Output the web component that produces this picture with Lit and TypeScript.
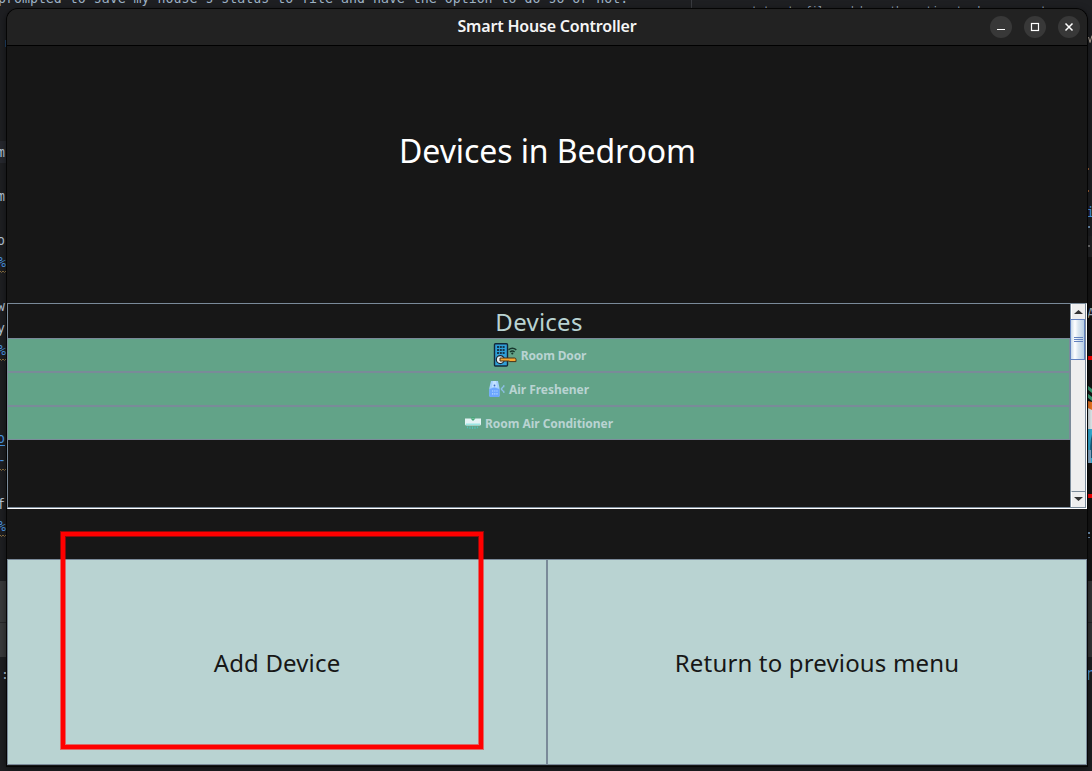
import { LitElement, html, css, svg } from "lit";
import { customElement } from "lit/decorators.js";

const doorIcon = svg`<svg width="24" height="24" viewBox="0 0 24 24">
  <rect x="1.5" y=".8" width="13" height="22.2" rx="1" fill="#2f9fd8" stroke="#14293a" stroke-width="1.4"/>
  <path d="M4 4h8M4 7h8M4 10h8" stroke="#16384e" stroke-width="2" stroke-dasharray="2 .8"/>
  <circle cx="7.3" cy="16.6" r="4" fill="#e6edf2" stroke="#1b2833" stroke-width="1.2"/>
  <path d="M7 15h14.5q1.5 0 1.5 1.5V18.600H17l-1-.6H7z" fill="#f5a733" stroke="#4a3418" stroke-width="1"/>
  <path d="M15.500 6.800q3.800-3.200 7.800 0M17 9q2.300-1.800 4.600 0" fill="none" stroke="#17372d" stroke-width="1.500"/>
  <circle cx="19.300" cy="10.500" r="1.100" fill="#17372d"/></svg>`;

const freshenerIcon = svg`<svg width="16" height="16" viewBox="0 0 16 16">
  <path d="M2 0h7l1.500 7v7.500q0 1.500-1.500 1.500H2Q.500 16 .300 14.500V7z" fill="#a4d0ff"/><path d="M4 0h3l1 6H3z" fill="#c3e2ff"/>
  <path d="M.3 8l5-1.500 5.200 1.500v6.500q0 1.500-1.500 1.500H2Q.300 16 .300 14.500z" fill="#6ca6ff"/>
  <circle cx="5.500" cy="4.500" r=".9" fill="#3c6cc4"/>
  <path d="M3 10h6M3 12.800h6" stroke="#b9dcff" stroke-width="1.200" stroke-dasharray="1.200 1"/>
  <path d="M12 8l3.500-3.500M12 8h1.500M12 8l3.500 3.500M14.800 4v2.200M14.800 9.800V12" stroke="#8cbfe4" stroke-width="1.200"/></svg>`;

const conditionerIcon = svg`<svg width="16" height="16" viewBox="0 0 16 16">
  <path d="M0 3.500h16V9q0 1.500-1.500 1.500h-13Q0 10.500 0 9z" fill="#e4f3f4"/>
  <path d="M1 8.500h14v1.500H1z" fill="#9be6e4"/><path d="M5.500 3.500h5L8 6z" fill="#47a878"/>
  <path d="M6 3q2-1.500 4 0" stroke="#47a878" fill="none"/>
  <path d="M2.500 11.500v1.700M5 11.500v2.500M7.500 11.500v2.500M10 11.500v2.500M12.500 11.500v1.700" stroke="#52c2ba" stroke-width="1"/></svg>`;

const devices = [
  { name: "Room Door", icon: doorIcon },
  { name: "Air Freshener", icon: freshenerIcon },
  { name: "Room Air Conditioner", icon: conditionerIcon },
];

@customElement("desktop-backdrop")
class DesktopBackdrop extends LitElement {
  static styles = css`
    :host { position: absolute; inset: 0; overflow: hidden; background: #1e1f22; }
    svg { display: block; font: 13.25px "DejaVu Sans Mono", monospace; }
    .small { font-size: 10px; }
    .large { font-size: 17px; }
  `;
  render() {
    return html`<svg width="1092" height="771">
      <rect y="141" width="7" height="22" fill="#26282e"/>
      <rect y="581" width="7" height="76" fill="#393a3c"/>
      <rect y="622" width="7" height="1" fill="#29292b"/>
      <rect x="1086" y="257" width="6" height="324" fill="#151515"/>
      <rect x="1086" y="236" width="6" height="21" fill="#222325"/>
      <rect x="1086" y="581" width="6" height="76" fill="#353637"/>
      <rect x="1086" y="622" width="6" height="1" fill="#252628"/>
      <rect x="691" width="1" height="8" fill="#393b40"/>
      <text x="-2" y="3.300" fill="#9fb3c6">prompted to save my house's status to file and have the option to do so or not.</text>
      <text class="small" x="745.500" y="14" fill="#9fb3c6">status to file and have the option to do so or not</text>
      <g fill="#b9c8d8">
        <text x="-3" y="157">m</text><text x="-3" y="201">m</text><text x="-3" y="245">o</text>
        <text x="-3" y="311">w</text><text x="-3" y="333">y</text><text x="-3" y="509">f</text>
        <text x="1" y="679">:</text>
      </g>
      <g fill="#4b9be8">
        <text x="-2" y="267">%</text><text x="-2" y="355">%</text><text x="-3" y="443">o</text>
        <text x="-2" y="465">-</text><text x="-2" y="531">%</text>
        <path d="M0 445h5v1H0z"/>
        <text x="1086.500" y="217">i</text><text class="large" x="1086" y="680">n</text>
      </g>
      <path d="M0 271l1.500 1.500L3 271l1.500 1.500L6 271M0 359l1.500 1.500L3 359l1.500 1.500L6 359M0 469l1.500 1.500L3 469l1.500 1.500L6 469M0 535l1.500 1.500L3 535l1.500 1.500L6 535" fill="none" stroke="#8b7040"/>
      <path d="M5 40h1v7H5z" fill="#20456b"/>
      <path d="M1088.500 37l1.500 5.500 2-7" fill="none" stroke="#b5a99c"/>
      <text x="1087" y="318" fill="#a7b7c6">A</text>
      <path d="M1088 168h1v2h-1zM1088 190h1v2h-1z" fill="#a8683a"/>
      <path d="M1088 226h2v2h-2zM1088 532h2v2h-2zM1088 537h2v1h-2z" fill="#7195b8"/>
      <path d="M1088 245h2v2h-2z" fill="#777"/>
      <path d="M1087 356h5v4h-5zM1087 494h5v4h-5z" fill="#f00"/>
      <path d="M1088 407h4v23h-4z" fill="#e8f4f7"/><path d="M1088 429h4v34h-4z" fill="#35b5df"/>
      <path d="M1092 434v24h-1q-2-12 1-24z" fill="#1c5877"/><path d="M1088 450h3v13h-3z" fill="#8bb4d4"/>
      <path d="M1087 385l5 4v4l-5-4zM1087 393l5 4v4l-5-4z" fill="#39a57b"/>
      <path d="M1088 401l4 1v8l-4-2z" fill="#f27822"/>
    </svg>`;
  }
}

@customElement("title-bar")
class TitleBar extends LitElement {
  static styles = css`
    :host { display: grid; grid-template-columns: 1fr auto 1fr; align-items: center; box-sizing: border-box; height: 37px;
      background: #222; border-bottom: 1px solid #000; border-radius: 11px 11px 0 0; color: #f5f5f5; }
    .name { grid-column: 2; font: 600 16px/34px "Noto Sans", sans-serif; white-space: nowrap; letter-spacing: -.2px; padding-bottom: 2px; }
    .controls { display: flex; justify-content: flex-end; gap: 12px; padding-right: 7px; }
    .control { width: 22px; height: 22px; border-radius: 50%; background: #383838; }
    svg { display: block; fill: none; stroke: #fff; }
  `;
  render() {
    return html`<div class="name">Smart House Controller</div>
      <div class="controls">
        <div class="control"><svg width="22" height="22"><path d="M7 13.500h8"/></svg></div>
        <div class="control"><svg width="22" height="22"><rect x="7.500" y="7.500" width="7" height="7" stroke-width="1.200"/></svg></div>
        <div class="control"><svg width="22" height="22"><path d="M7.500 7.500l7 7M14.500 7.500l-7 7" stroke-width="1.500"/></svg></div>
      </div>`;
  }
}

@customElement("metal-scrollbar")
class MetalScrollbar extends LitElement {
  static styles = css`
    :host { display: flex; flex-direction: column; box-sizing: border-box; width: 16px; background: #eee;
      border-left: 1px solid #7a8a99; border-right: 1px solid #7a8a99; }
    .arrow { box-sizing: border-box; height: 15px; display: flex; align-items: center; padding-left: 2px; background: #eee; border-left: 1px solid #fff; }
    .down { margin-top: auto; height: 16px; border-top: 1px solid #7a8a99; padding-bottom: 2px; }
    .thumb { box-sizing: border-box; height: 41px; margin-left: -1px; border: 1px solid #6382bf; display: flex; flex-direction: column;
      justify-content: center; align-items: center; gap: 1px; padding-left: 1px;
      background: linear-gradient(90deg, #c8d9e8, #fff 30%, #dce7f0 55%, #b8cfe5); }
    .grip { width: 9px; height: 1px; background: #6382bf; }
  `;
  render() {
    return html`<div class="arrow"><svg width="9" height="4"><path d="M0 4L4.500 0 9 4z" fill="#333"/></svg></div>
      <div class="thumb"><i class="grip"></i><i class="grip"></i><i class="grip"></i></div>
      <div class="arrow down"><svg width="9" height="4"><path d="M0 0h9L4.500 4z" fill="#333"/></svg></div>`;
  }
}

@customElement("app-root")
class AppRoot extends LitElement {
  static styles = css`
    :host { display: block; position: relative; width: 1092px; height: 771px; overflow: hidden; font-family: "Noto Sans", sans-serif; }
    .window { position: absolute; left: 7px; top: 9px; width: 1080px; height: 757px; display: flex; flex-direction: column;
      background: #171717; border-radius: 11px 11px 0 0; box-shadow: 0 0 0 1px #050505, 0 2px 7px 1px rgba(0,0,0,.5); }
    .heading { margin: 0; height: 257px; display: flex; align-items: flex-start; justify-content: center; box-sizing: border-box;
      padding: 82px 0 0 1px; font-weight: 400; font-size: 32px; line-height: 46px; letter-spacing: -.09px; color: #fff; white-space: nowrap; }
    .pane { box-sizing: border-box; height: 206px; display: flex; border-top: 1px solid #7a8a99; border-left: 1px solid #7a8a99;
      border-bottom: 1px solid #fff; border-right: 1px solid #fff; }
    .inner { flex: 1; display: flex; border-bottom: 1px solid #7a8a99; }
    .list { flex: 1; display: flex; flex-direction: column; }
    .caption { height: 34px; text-align: center; color: #b9d3d2; font-size: 24px; letter-spacing: .25px; line-height: 36px; }
    .device { box-sizing: border-box; height: 34px; display: flex; align-items: center; justify-content: center; gap: 4px;
      border: 1px solid #7a8a99; border-left: 0; background: #62a388; color: #b9d3d2; font: 700 12px/17px "Noto Sans", sans-serif;
      letter-spacing: -.04px; padding-left: 1px; }
    .device:nth-child(2) { padding-left: 2px; letter-spacing: -.16px; }
    .device svg { display: block; }
    .actions { margin-top: 50px; height: 206px; display: grid; grid-template-columns: 1fr 1fr; }
    .action { box-sizing: border-box; border: 1px solid #7a8a99; background: #b9d3d2; color: #171717; display: flex; align-items: center;
      justify-content: center; padding: 1px 0 0; font-size: 24px; letter-spacing: .16px; line-height: 34px; }
    .marker { position: absolute; box-sizing: border-box; left: 61px; top: 532px; width: 422px; height: 217px; border: 4px solid #f00;
      box-shadow: 0 0 0 1px rgba(255,0,0,.5), inset 0 0 0 1px rgba(255,0,0,.5); }
  `;
  render() {
    return html`<desktop-backdrop></desktop-backdrop>
      <main class="window">
        <title-bar></title-bar>
        <h1 class="heading"><span>Devices in Bedroom</span></h1>
        <section class="pane"><div class="inner">
          <div class="list">
            <div class="caption">Devices</div>
            ${devices.map((d) => html`<div class="device">${d.icon}<span>${d.name}</span></div>`)}
          </div>
          <metal-scrollbar></metal-scrollbar>
        </div></section>
        <div class="actions">
          <div class="action">Add Device</div>
          <div class="action">Return to previous menu</div>
        </div>
      </main>
      <div class="marker"></div>`;
  }
}
